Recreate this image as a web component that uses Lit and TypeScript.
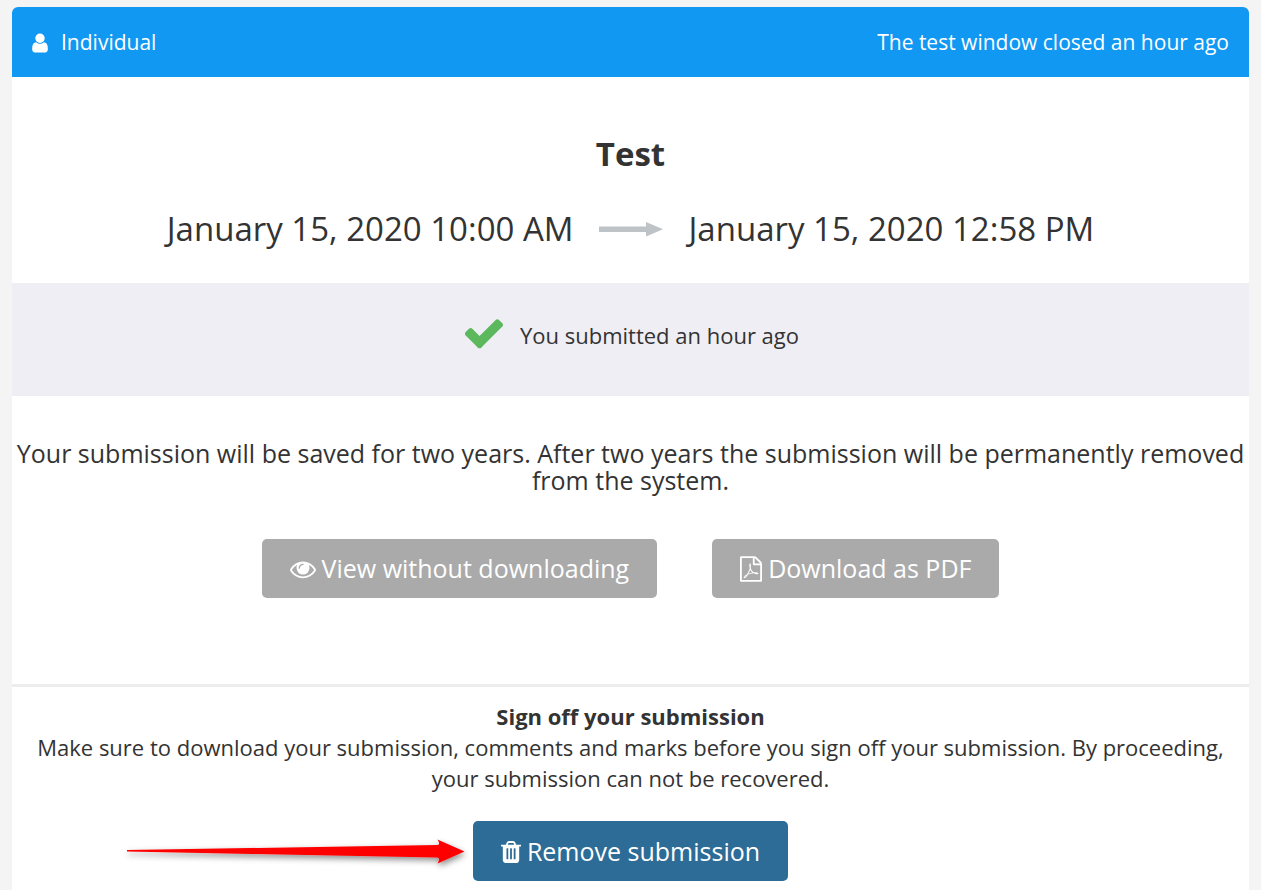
import { LitElement, html, css, svg } from "lit";
import { customElement } from "lit/decorators.js";

interface Glyph {
  width: number;
  path: string;
}

// Icon outlines share an em of 1792 units; width is the advance of each one.
const glyphs: Record<string, Glyph> = {
  user: {
    width: 1280,
    path: "M1280 1399q0 109-62.5 187t-150.5 78h-854q-88 0-150.5-78t-62.5-187q0-85 8.5-160.5t31.5-152 58.5-131 94-89 134.5-34.5q131 128 313 128t313-128q76 0 134.5 34.5t94 89 58.5 131 31.5 152 8.5 160.5zm-256-887q0 159-112.5 271.5t-271.5 112.5-271.5-112.5-112.5-271.5 112.5-271.5 271.5-112.5 271.5 112.5 112.5 271.5z",
  },
  check: {
    width: 1792,
    path: "M1671 566q0 40-28 68l-724 724-136 136q-28 28-68 28t-68-28l-136-136-362-362q-28-28-28-68t28-68l136-136q28-28 68-28t68 28l294 295 656-657q28-28 68-28t68 28l136 136q28 28 28 68z",
  },
  eye: {
    width: 1792,
    path: "M1664 960q-152-236-381-353 61 104 61 225 0 185-131.5 316.5t-316.5 131.5-316.5-131.5-131.5-316.5q0-121 61-225-229 117-381 353 133 205 333.5 326.5t434.5 121.5 434.5-121.5 333.5-326.5zm-720-384q0-20-14-34t-34-14q-125 0-214.5 89.5t-89.5 214.5q0 20 14 34t34 14 34-14 14-34q0-86 61-147t147-61q20 0 34-14t14-34zm848 384q0 34-20 69-140 230-376.5 368.5t-499.5 138.5-499.5-139-376.5-368q-20-35-20-69t20-69q140-229 376.5-368t499.5-139 499.5 139 376.5 368q20 35 20 69z",
  },
  pdf: {
    width: 1792,
    path: "M1596 380q28 28 48 76t20 88v1152q0 40-28 68t-68 28h-1344q-40 0-68-28t-28-68v-1600q0-40 28-68t68-28h896q40 0 88 20t76 48zm-444-244v376h376q-10-29-22-41l-313-313q-12-12-41-22zm384 1528v-1024h-416q-40 0-68-28t-28-68v-416h-768v1536h1280zm-514-593q33 26 84 56 59-7 117-7 147 0 177 49 16 22 2 52 0 1-1 2l-2 2v1q-6 38-71 38-48 0-115-20t-130-53q-221 24-392 83-153 262-242 262-15 0-28-7l-24-12q-1-1-6-5-10-10-6-36 9-40 56-91.5t132-96.5q14-9 23 6 2 2 2 4 52-85 107-197 68-136 104-262-24-82-30.5-159.5t6.5-127.5q11-40 42-40h22q23 0 35 15 18 21 9 68-2 6-4 8 1 3 1 8v30q-2 123-14 192 55 164 146 238zm-576 411q52-24 137-158-51 40-87.5 84t-49.5 74zm398-920q-15 42-2 132 1-7 7-44 0-3 7-43 1-4 4-8-1-1-1-2-1-2-1-3-1-22-13-36 0 1-1 2v2zm-124 661q135-54 284-81-2-1-13-9.5t-16-13.5q-76-67-127-176-27 86-83 197-30 56-45 83zm646-16q-24-24-140-24 76 28 124 28 14 0 18-1 0-1-2-3z",
  },
  trash: {
    width: 1792,
    path: "M704 1376v-704q0-14-9-23t-23-9h-64q-14 0-23 9t-9 23v704q0 14 9 23t23 9h64q14 0 23-9t9-23zm256 0v-704q0-14-9-23t-23-9h-64q-14 0-23 9t-9 23v704q0 14 9 23t23 9h64q14 0 23-9t9-23zm256 0v-704q0-14-9-23t-23-9h-64q-14 0-23 9t-9 23v704q0 14 9 23t23 9h64q14 0 23-9t9-23zm-544-992h448l-48-117q-7-9-17-11h-317q-10 2-17 11zm928 32v64q0 14-9 23t-23 9h-96v948q0 83-47 143.5t-113 60.5h-832q-66 0-113-58.5t-47-141.5v-952h-96q-14 0-23-9t-9-23v-64q0-14 9-23t23-9h309l70-167q15-37 54-63t79-26h320q40 0 79 26t54 63l70 167h309q14 0 23 9t9 23z",
  },
};

const icon = (name: string, viewBox?: string) => {
  const g = glyphs[name];
  return html`<svg class="icon icon-${name}" viewBox=${viewBox ?? `0 0 ${g.width} 1792`} aria-hidden="true">
    ${svg`<path d=${g.path} />`}
  </svg>`;
};

@customElement("app-root")
export class AppRoot extends LitElement {
  static styles = css`
    :host {
      display: flex;
      flex-direction: column;
      box-sizing: border-box;
      min-height: 100vh;
      padding: 7px 12px 0;
      background: #f4f4f4;
      color: #333;
      font-family: "Open Sans", "Noto Sans", sans-serif;
      font-size: 22px;
      line-height: 31px;
    }
    h1, h2, p {
      margin: 0;
    }
    .icon {
      display: block;
      flex: none;
      fill: currentColor;
    }
    .card {
      flex: 1;
      background: #fff;
      border-radius: 6px 6px 0 0;
      overflow: hidden;
      text-align: center;
    }
    .bar {
      display: flex;
      justify-content: space-between;
      align-items: center;
      padding: 21px 20px 20px;
      background: #1098f2;
      color: #fff;
      font-size: 21px;
      line-height: 29px;
    }
    .kind {
      display: flex;
      align-items: center;
      gap: 13px;
    }
    .icon-user {
      width: 16px;
      height: 22px;
    }
    .summary {
      padding: 54px 10px 31px;
    }
    .title {
      font-size: 33px;
      line-height: 46px;
      font-weight: 700;
    }
    .period {
      display: flex;
      justify-content: center;
      align-items: center;
      gap: 25px;
      margin-top: 29px;
      font-size: 33px;
      line-height: 46px;
    }
    .period-arrow {
      width: 65px;
      height: 16px;
      fill: #bdc3c7;
    }
    .status {
      display: flex;
      justify-content: center;
      gap: 14px;
      padding: 28px 10px 41px;
      background: #efeef4;
    }
    .status p {
      padding-top: 9px;
    }
    .icon-check {
      width: 44px;
      height: 44px;
      color: #5cb85c;
    }
    .files {
      padding: 44px 0 86px;
      border-bottom: 3px solid #ededed;
    }
    .notice {
      font-size: 25px;
      line-height: 27px;
    }
    .actions {
      display: flex;
      justify-content: center;
      gap: 55px;
      margin-top: 45px;
    }
    .btn {
      display: inline-flex;
      align-items: center;
      gap: 6px;
      padding: 12px 28px;
      border: 0;
      border-radius: 5px;
      background: #aaa;
      color: #fff;
      font: inherit;
      font-size: 25px;
      line-height: 35px;
      cursor: pointer;
    }
    .btn .icon {
      width: 26px;
      height: 26px;
    }
    .btn .icon-pdf {
      width: 22px;
    }
    .btn .icon-trash {
      width: 20px;
    }
    .btn-primary {
      padding: 13px 28px 12px;
      background: #2d6c96;
    }
    .signoff {
      padding: 14px 10px 9px;
    }
    .signoff h2 {
      font-size: 22px;
      line-height: 31px;
      font-weight: 700;
    }
    .remove {
      position: relative;
      display: inline-block;
      margin-top: 27px;
    }
    .remove .btn {
      display: flex;
    }
    .pointer {
      position: absolute;
      right: 100%;
      top: 8px;
      margin-right: 3px;
      width: 350px;
      height: 44px;
      overflow: visible;
      pointer-events: none;
    }
  `;

  render() {
    return html`
      <main class="card">
        <header class="bar">
          <span class="kind">${icon("user")}<span>Individual</span></span>
          <span>The test window closed an hour ago</span>
        </header>
        <section class="summary">
          <h1 class="title">Test</h1>
          <div class="period">
            <time datetime="2020-01-15T10:00">January 15, 2020 10:00 AM</time>
            <svg class="period-arrow" viewBox="0 0 65 16" aria-label="to" role="img">
              <path d="M0 5.5H47V1L64 8.2L47 15.400V11H0Z" />
            </svg>
            <time datetime="2020-01-15T12:58">January 15, 2020 12:58 PM</time>
          </div>
        </section>
        <section class="status">
          ${icon("check")}
          <p>You submitted an hour ago</p>
        </section>
        <section class="files">
          <p class="notice">
            Your submission will be saved for two years. After two years the submission will be
            permanently removed from the system.
          </p>
          <div class="actions">
            <button type="button" class="btn">${icon("eye")}<span>View without downloading</span></button>
            <button type="button" class="btn">${icon("pdf", "128 0 1536 1792")}<span>Download as PDF</span></button>
          </div>
        </section>
        <section class="signoff">
          <h2>Sign off your submission</h2>
          <p>
            Make sure to download your submission, comments and marks before you sign off your
            submission. By proceeding, your submission can not be recovered.
          </p>
          <div class="remove">
            <svg class="pointer" viewBox="0 0 350 44" aria-hidden="true">
              <defs>
                <filter id="shade" x="-5%" y="-60%" width="110%" height="240%">
                  <feDropShadow dx="1" dy="3" stdDeviation="3" flood-color="#000" flood-opacity="0.45" />
                </filter>
              </defs>
              <path fill="#f00" filter="url(#shade)"
                d="M7 21L317 16Q321 16 317.500 10.500L344.500 22.500L317.500 34.500Q321 28.500 317 28.500L7 22.500Z" />
            </svg>
            <button type="button" class="btn btn-primary">${icon("trash", "192 0 1408 1792")}<span>Remove submission</span></button>
          </div>
        </section>
      </main>
    `;
  }
}
